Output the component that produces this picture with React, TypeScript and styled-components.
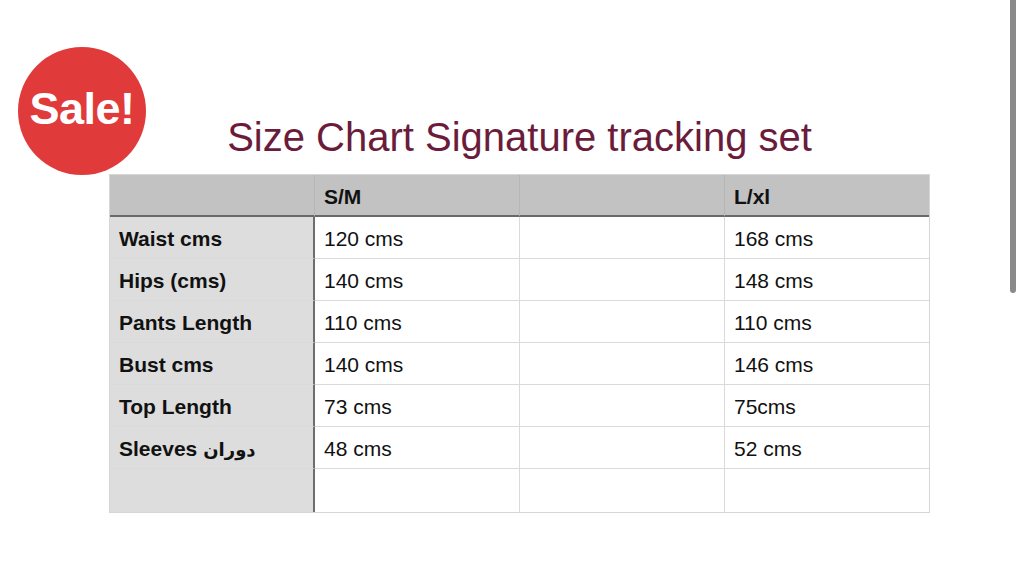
import React from "react";
import styled, { createGlobalStyle } from "styled-components";

const Global = createGlobalStyle`
  html, body { margin: 0; padding: 0; background: #fff; }
  body { font-family: "Liberation Sans", Arial, sans-serif; }
`;

const Page = styled.div`
  position: relative;
  width: 1024px;
  height: 586px;
  overflow: hidden;
  background: #fff;
  padding: 117px 0 0 109px;
  box-sizing: border-box;
  display: flex;
  flex-direction: column;
`;

const SaleBadge = styled.div`
  position: absolute;
  left: 18px;
  top: 47px;
  width: 128px;
  height: 128px;
  border-radius: 50%;
  background: #e03a3a;
  color: #fff;
  font-weight: 700;
  font-size: 45px;
  display: flex;
  align-items: center;
  justify-content: center;
  letter-spacing: -0.5px;
  padding-bottom: 4px;
  box-sizing: border-box;
`;

const Scrollbar = styled.div`
  position: absolute;
  left: 1010px;
  top: -4px;
  width: 6px;
  height: 297px;
  border-radius: 3px;
  background: #8a8a8a;
`;

const Title = styled.h1`
  margin: 0 0 17px;
  width: 821px;
  text-align: center;
  font-weight: 400;
  font-size: 40px;
  line-height: 40px;
  color: #6a1c3a;
  letter-spacing: 0;
`;

const Grid = styled.div`
  display: grid;
  grid-template-columns: 205px 205px 205px 204px;
  align-self: flex-start;
  border: 1px solid #d6d6d6;
`;

const Cell = styled.div<{ $head?: boolean; $label?: boolean; $divider?: boolean; $last?: boolean }>`
  height: ${(p) => (p.$last ? 43 : 42)}px;
  box-sizing: border-box;
  display: flex;
  align-items: center;
  padding: 3px 0 0 9px;
  font-size: 21px;
  color: #111;
  font-family: "Liberation Sans", "DejaVu Sans", sans-serif;
  font-weight: ${(p) => (p.$head || p.$label ? 700 : 400)};
  background: ${(p) => (p.$head ? "#c2c2c2" : p.$label ? "#dddddd" : "#fff")};
  border-bottom: ${(p) => (p.$head ? "2px solid #6a6a6a" : p.$last ? "none" : "1px solid #dadada")};
  border-right: ${(p) =>
    p.$divider && !p.$head ? "2px solid #6e6e6e" : p.$head ? "1px solid #b6b6b6" : "1px solid #dadada"};
  &:nth-child(4n) { border-right: none; }
`;

const Arabic = styled.span`
  font-family: "DejaVu Sans", sans-serif;
  font-weight: 700;
  font-size: 18px;
  margin-left: 6px;
`;

const rows: [React.ReactNode, string, string][] = [
  ["Waist cms", "120 cms", "168 cms"],
  ["Hips (cms)", "140 cms", "148 cms"],
  ["Pants Length", "110 cms", "110 cms"],
  ["Bust cms", "140 cms", "146 cms"],
  ["Top Length", "73 cms", "75cms"],
  [
    <>
      Sleeves<Arabic>دوران</Arabic>
    </>,
    "48 cms",
    "52 cms",
  ],
  ["", "", ""],
];

export default function App() {
  return (
    <>
      <Global />
      <Page>
        <SaleBadge>Sale!</SaleBadge>
        <Scrollbar />
        <Title>Size Chart Signature tracking set</Title>
        <Grid>
          <Cell $head $divider></Cell>
          <Cell $head>S/M</Cell>
          <Cell $head></Cell>
          <Cell $head>L/xl</Cell>
          {rows.map((r, i) => {
            const last = i === rows.length - 1;
            return (
              <React.Fragment key={i}>
                <Cell $label $divider $last={last}>{r[0]}</Cell>
                <Cell $last={last}>{r[1]}</Cell>
                <Cell $last={last}></Cell>
                <Cell $last={last}>{r[2]}</Cell>
              </React.Fragment>
            );
          })}
        </Grid>
      </Page>
    </>
  );
}
